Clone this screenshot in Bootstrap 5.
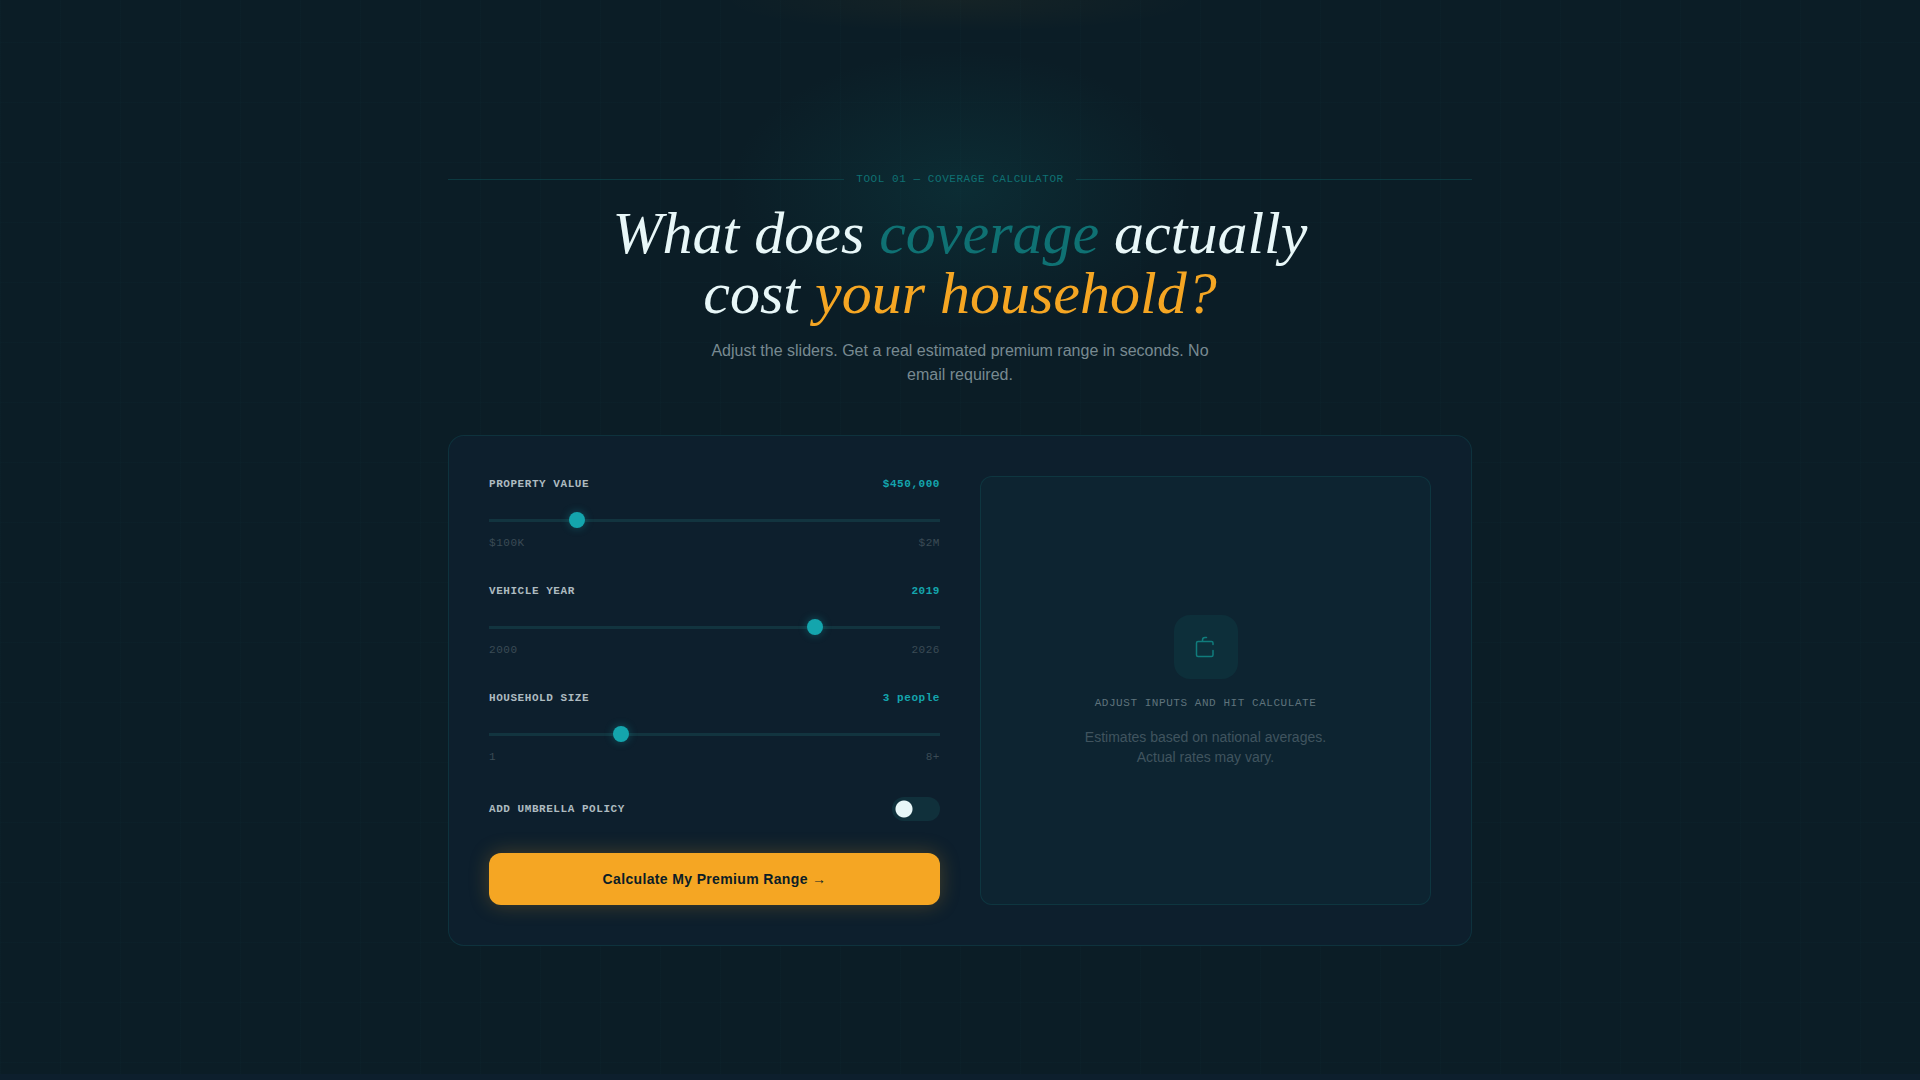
<!DOCTYPE html>
<html lang="en">
<head>
<meta charset="utf-8">
<meta name="viewport" content="width=device-width, initial-scale=1">
<title>Coverage Calculator</title>
<link href="https://cdn.jsdelivr.net/npm/bootstrap@5.3.0/dist/css/bootstrap.min.css" rel="stylesheet">
<style>
  :root {
    --ink: #0b1d26;
    --navy: #0d1f2d;
    --teal: #0f7173;
    --aqua: #14a5ad;
    --amber: #f5a623;
    --ice: #e8f7f8;
    --hairline: rgba(20, 120, 120, .22);
    --grid: rgba(20, 120, 120, .03);
  }
  body {
    background: var(--navy);
    color: var(--ice);
    font-family: "Liberation Sans", Arial, sans-serif;
  }
  .calc-section {
    background:
      radial-gradient(ellipse 240px 32px at 50% 0, rgba(245, 166, 35, .045), transparent),
      radial-gradient(ellipse 230px 140px at 50% 190px, rgba(15, 113, 115, .18), transparent),
      linear-gradient(var(--grid) 1px, transparent 1px) 0 42px / 60px 60px,
      linear-gradient(90deg, var(--grid) 1px, transparent 1px) 0 0 / 60px 60px,
      var(--ink);
    padding: 171px 24px 128px;
  }
  .calc-wrap { max-width: 1024px; }
  .tiny-mono {
    font-family: "Liberation Mono", "Courier New", monospace;
    font-size: 11px;
    line-height: 16px;
    letter-spacing: .05em;
  }
  .eyebrow { color: var(--teal); gap: 12px; }
  .eyebrow::before, .eyebrow::after {
    content: "";
    flex: 1;
    height: 1px;
    background: rgba(15, 113, 115, .35);
  }
  .headline {
    font: italic 400 60px/60px "Liberation Serif", "Times New Roman", serif;
    max-width: 760px;
  }
  .text-teal { color: var(--teal); }
  .text-aqua { color: var(--aqua); }
  .text-amber { color: var(--amber); }
  .intro { color: #788a91; font-size: 16px; line-height: 24px; max-width: 512px; }
  .calc-card {
    background: var(--navy);
    border: 1px solid var(--hairline);
    border-radius: 16px;
    padding: 40px;
  }
  .calc-grid { --bs-gutter-x: 40px; --bs-gutter-y: 40px; }
  .field-label { color: #aebbc0; }
  .range-ends { color: #3b4b55; }
  .fields { gap: 32px; }
  .slider {
    appearance: none;
    display: block;
    width: 100%;
    height: 16px;
    margin: 20px 0 7px;
    background: linear-gradient(#12343f, #12343f) center / 100% 3px no-repeat;
  }
  .slider::-webkit-slider-thumb {
    appearance: none;
    width: 16px;
    height: 16px;
    border-radius: 50%;
    background: var(--aqua);
    box-shadow: 0 0 8px rgba(20, 165, 173, .4);
  }
  .toggle.form-check-input {
    width: 48px;
    height: 24px;
    margin: 0;
    border: 0;
    border-radius: 12px;
    background: radial-gradient(circle at 12px 12px, var(--ice) 8px, transparent 9px) #10303b;
  }
  .toggle.form-check-input:checked {
    background: radial-gradient(circle at 36px 12px, var(--ice) 8px, transparent 9px) var(--teal);
  }
  .btn-calc, .btn-calc:hover {
    background: var(--amber);
    color: var(--ink);
    border: 0;
    border-radius: 12px;
    font-size: 14px;
    font-weight: 700;
    line-height: 20px;
    letter-spacing: .025em;
    padding: 16px;
    box-shadow: 0 0 20px rgba(245, 166, 35, .25);
  }
  .result-panel {
    background: #0d2431;
    border: 1px solid var(--hairline);
    border-radius: 12px;
    padding: 24px;
  }
  .result-icon { width: 64px; height: 64px; border-radius: 16px; background: #0d2f3a; color: #107c7c; }
  .result-hint { color: #5f737c; }
  .result-note { color: #40545f; font-size: 14px; line-height: 20px; }
</style>
</head>
<body>
<main class="calc-section">
  <div class="calc-wrap mx-auto">
    <header class="text-center">
      <div class="eyebrow tiny-mono d-flex align-items-center">TOOL 01 — COVERAGE CALCULATOR</div>
      <h1 class="headline mx-auto mt-3 mb-3">What does <span class="text-teal">coverage</span> actually cost <span class="text-amber">your household?</span></h1>
      <p class="intro mx-auto mb-5">Adjust the sliders. Get a real estimated premium range in seconds. No email required.</p>
    </header>

    <section class="calc-card">
      <div class="row calc-grid">
        <form class="col-md-6 d-flex flex-column fields" onsubmit="return false">
          <div>
            <div class="d-flex justify-content-between tiny-mono fw-bold">
              <label class="field-label" for="property">PROPERTY VALUE</label>
              <output class="text-aqua p-0" for="property">$450,000</output>
            </div>
            <input class="slider" type="range" id="property" min="100000" max="2000000" step="10000" value="450000">
            <div class="d-flex justify-content-between tiny-mono range-ends"><span>$100K</span><span>$2M</span></div>
          </div>
          <div>
            <div class="d-flex justify-content-between tiny-mono fw-bold">
              <label class="field-label" for="vehicle">VEHICLE YEAR</label>
              <output class="text-aqua p-0" for="vehicle">2019</output>
            </div>
            <input class="slider" type="range" id="vehicle" min="2000" max="2026" value="2019">
            <div class="d-flex justify-content-between tiny-mono range-ends"><span>2000</span><span>2026</span></div>
          </div>
          <div>
            <div class="d-flex justify-content-between tiny-mono fw-bold">
              <label class="field-label" for="household">HOUSEHOLD SIZE</label>
              <output class="text-aqua p-0" for="household">3 people</output>
            </div>
            <input class="slider" type="range" id="household" min="1" max="8" value="3">
            <div class="d-flex justify-content-between tiny-mono range-ends"><span>1</span><span>8+</span></div>
          </div>
          <div class="d-flex justify-content-between align-items-center">
            <label class="field-label tiny-mono fw-bold" for="umbrella">ADD UMBRELLA POLICY</label>
            <input class="form-check-input toggle" type="checkbox" role="switch" id="umbrella">
          </div>
          <button class="btn btn-calc w-100" type="submit">Calculate My Premium Range →</button>
        </form>

        <div class="col-md-6">
          <div class="result-panel h-100 d-flex flex-column align-items-center justify-content-center text-center">
            <div class="result-icon d-flex align-items-center justify-content-center mb-3">
              <svg width="24" height="24" viewBox="0 0 24 24" fill="none" stroke="currentColor" stroke-width="1.500" stroke-linecap="round" stroke-linejoin="round" aria-hidden="true">
                <path d="M19 9.500V8a1.500 1.500 0 0 0-1.500-1.500H4A1.500 1.500 0 0 0 2.500 8V20A1.500 1.500 0 0 0 4 21.500H17.500a1.500 1.500 0 0 0 1.500-1.500V15.500M8.500 6.500V5a2.500 2.500 0 0 1 2.500-2.500H12.500"/>
              </svg>
            </div>
            <p class="result-hint tiny-mono mb-3">ADJUST INPUTS AND HIT CALCULATE</p>
            <p class="result-note mb-0">Estimates based on national averages.<br>Actual rates may vary.</p>
          </div>
        </div>
      </div>
    </section>
  </div>
</main>
<script src="https://cdn.jsdelivr.net/npm/bootstrap@5.3.0/dist/js/bootstrap.bundle.min.js"></script>
<script>
  const formats = {
    property: v => '$' + Number(v).toLocaleString('en-US'),
    vehicle: v => v,
    household: v => (v === '8' ? '8+' : v) + (v === '1' ? ' person' : ' people')
  };
  for (const [id, format] of Object.entries(formats)) {
    document.getElementById(id).addEventListener('input', e => {
      document.querySelector(`output[for="${id}"]`).value = format(e.target.value);
    });
  }
</script>
</body>
</html>
